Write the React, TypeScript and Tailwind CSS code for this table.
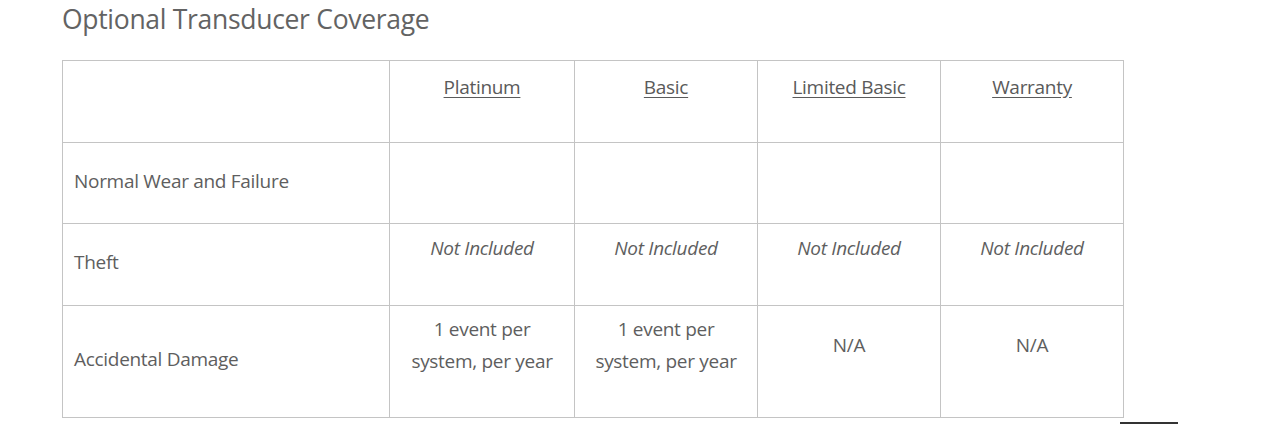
const FONT = { fontFamily: '"Open Sans", "Noto Sans", Arial, sans-serif' };

const PLANS = ['Platinum', 'Basic', 'Limited Basic', 'Warranty'];

type Cell = { text: string[]; italic?: boolean };

const ROWS: { label: string; height: string; cells: (Cell | null)[] }[] = [
  { label: 'Normal Wear and Failure', height: 'h-[81px]', cells: [null, null, null, null] },
  {
    label: 'Theft',
    height: 'h-[82px]',
    cells: PLANS.map(() => ({ text: ['Not Included'], italic: true })),
  },
  {
    label: 'Accidental Damage',
    height: 'h-[112px]',
    cells: [
      { text: ['1 event per', 'system, per year'] },
      { text: ['1 event per', 'system, per year'] },
      { text: ['N/A'] },
      { text: ['N/A'] },
    ],
  },
];

function ValueCell({ cell }: { cell: Cell | null }) {
  return (
    <td className="border border-[#c4c4c4] px-1 text-center align-middle">
      {cell ? (
        <p className={`mb-[34px] leading-[32px] ${cell.italic ? 'italic' : ''}`}>
          {cell.text.map((line) => (
            <span key={line} className="block">
              {line}
            </span>
          ))}
        </p>
      ) : null}
    </td>
  );
}

export default function App() {
  return (
    <div className="h-[424px] w-[1280px] overflow-hidden bg-white pl-[62px] text-[#5e5e5e]" style={FONT}>
      <h2 className="pt-[2px] text-[26.5px] leading-[35px] tracking-[-0.3px] text-[#636363]">
        Optional Transducer Coverage
      </h2>

      <table className="mt-[23px] w-[1061px] table-fixed border-collapse text-[19px] tracking-[-0.3px]">
        <colgroup>
          <col className="w-[327px]" />
          <col className="w-[185px]" />
          <col className="w-[183px]" />
          <col className="w-[183px]" />
          <col className="w-[183px]" />
        </colgroup>
        <thead>
          <tr className="h-[82px]">
            <th className="border border-[#c4c4c4]" />
            {PLANS.map((plan) => (
              <th key={plan} className="border border-[#c4c4c4] px-1 text-center align-middle font-normal">
                <p className="mb-[30px] leading-[32px]">
                  <a className="cursor-pointer text-[#5a5a5a] underline underline-offset-[3px]">{plan}</a>
                </p>
              </th>
            ))}
          </tr>
        </thead>
        <tbody>
          {ROWS.map((row) => (
            <tr key={row.label} className={row.height}>
              <td className="border border-[#c4c4c4] px-[11px] pb-[4px] align-middle">{row.label}</td>
              {row.cells.map((cell, j) => (
                <ValueCell key={j} cell={cell} />
              ))}
            </tr>
          ))}
        </tbody>
      </table>

      {/* sliver of the next element peeking in at the bottom edge */}
      <div className="ml-[1058px] mt-[4px] h-[3px] w-[58px] bg-[#333]" />
    </div>
  );
}
